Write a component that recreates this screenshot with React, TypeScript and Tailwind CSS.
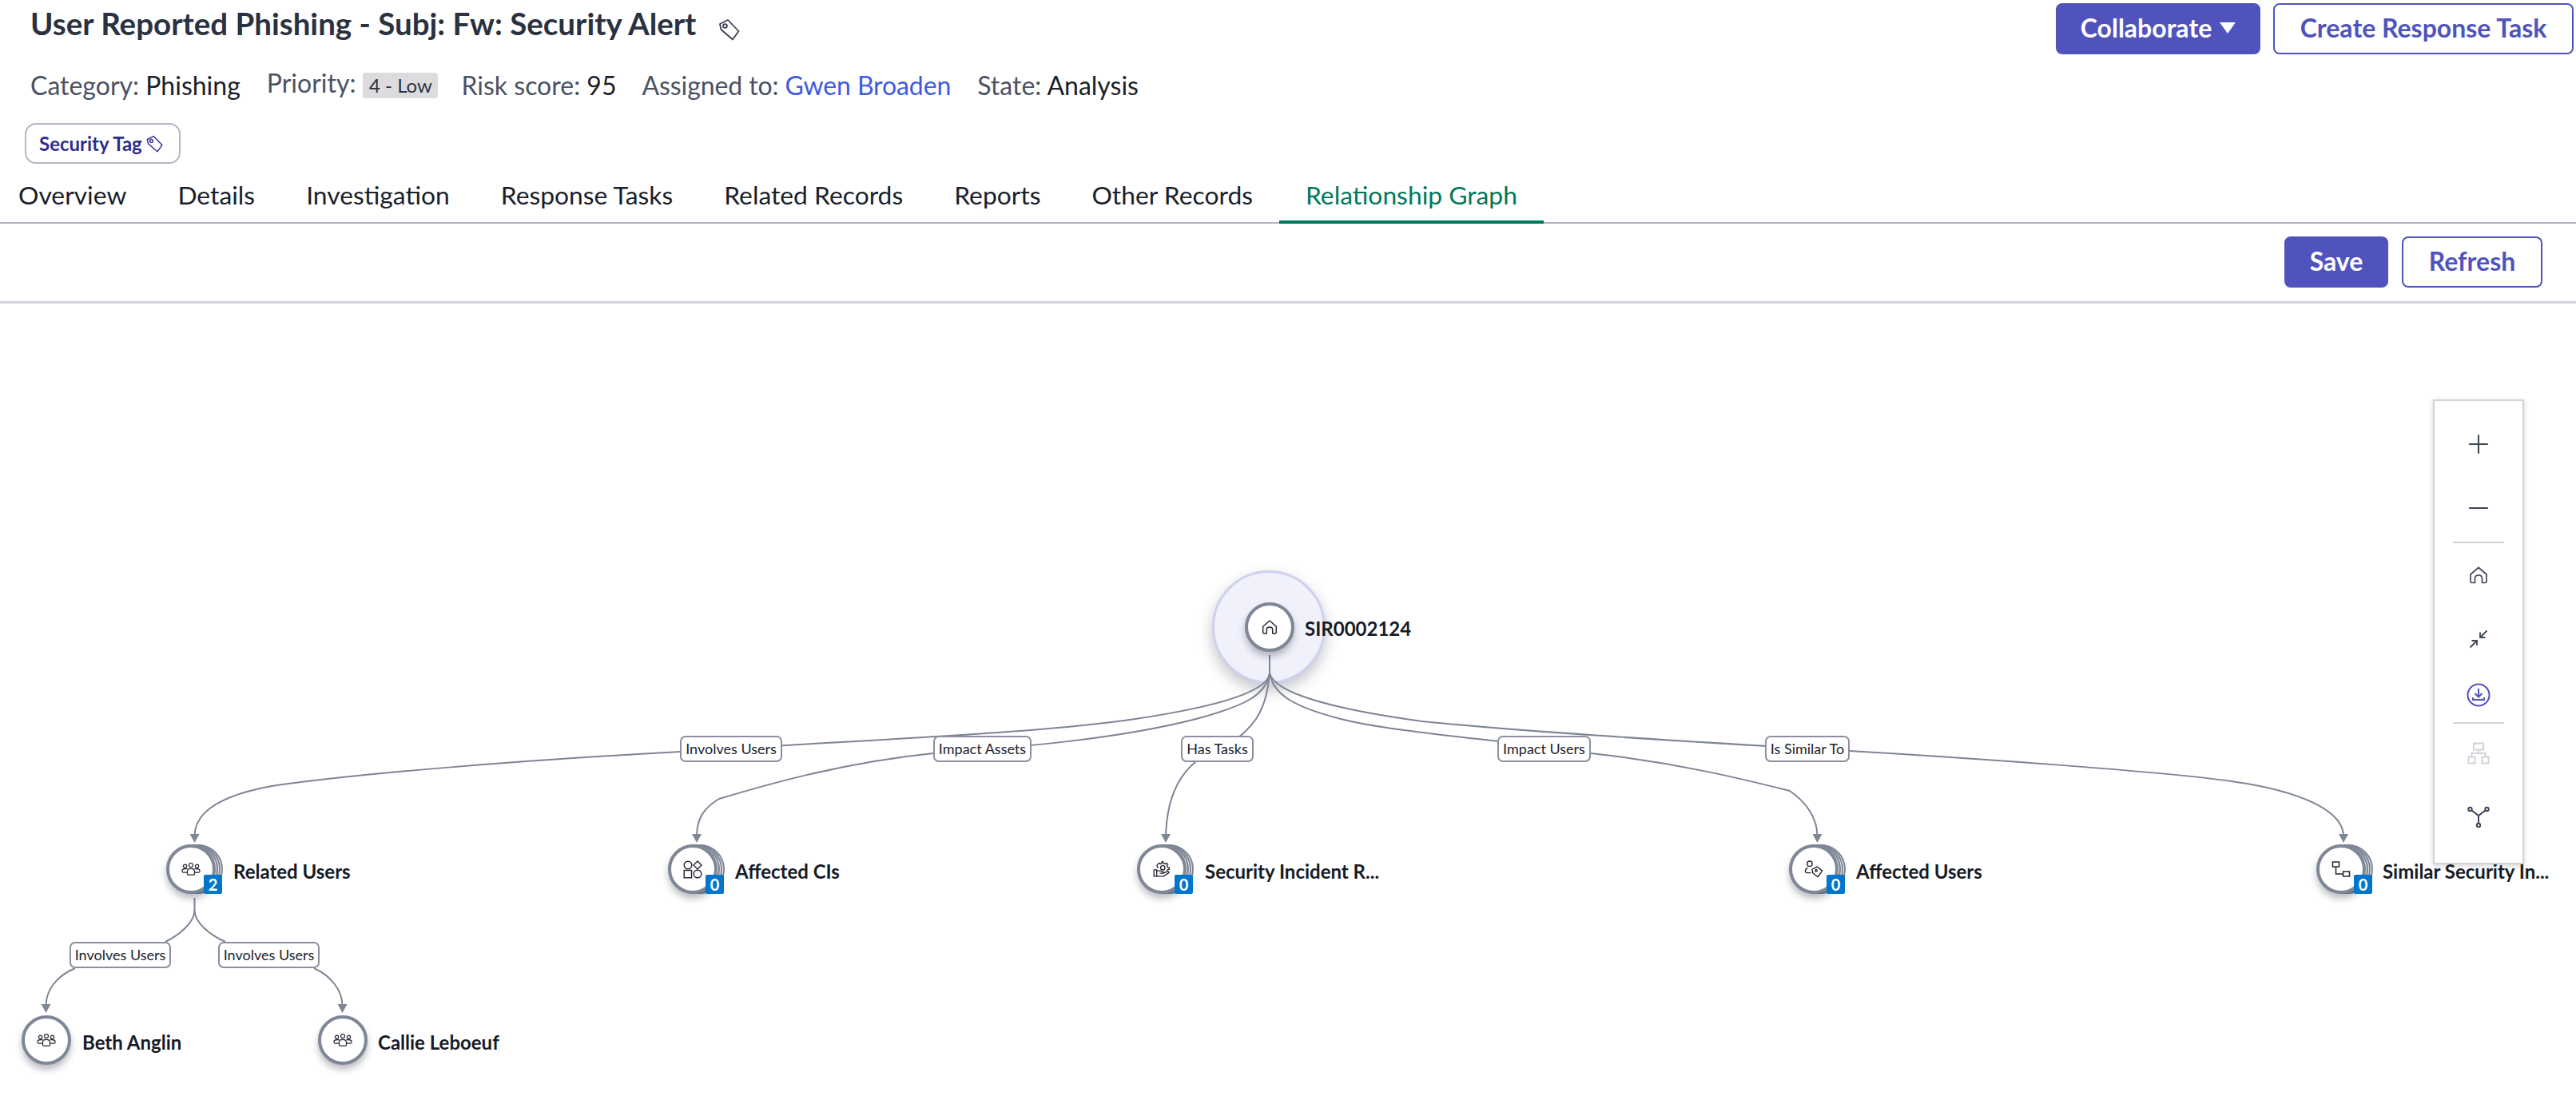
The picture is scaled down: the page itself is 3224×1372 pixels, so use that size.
import { ReactNode } from 'react'
import { Minus, Plus } from 'lucide-react'

const TOP = 380

const tabs = ['Overview', 'Details', 'Investigation', 'Response Tasks', 'Related Records', 'Reports', 'Other Records']

const TagIcon = ({ className }: { className: string }) => (
  <svg viewBox="0 0 28 28" fill="none" stroke="currentColor" strokeWidth="1.8" strokeLinejoin="round" className={className}>
    <path d="M3 7 L13 2 L26.5 16 L19 26.5 L4.5 14 Z" />
    <circle cx="9.5" cy="9.5" r="2.4" />
  </svg>
)

const HomeIcon = ({ className }: { className: string }) => (
  <svg viewBox="0 0 24 22" fill="none" stroke="currentColor" strokeWidth="1.7" strokeLinejoin="round" className={className}>
    <path d="M12 1.5 L22 10 V19 Q22 20.5 20.5 20.5 H16.5 V15.5 Q16.5 11 12 11 Q7.5 11 7.5 15.5 V20.5 H3.5 Q2 20.5 2 19 V10 Z" />
  </svg>
)

const UsersIcon = () => (
  <svg viewBox="0 0 24 16" fill="none" stroke="#20242e" strokeWidth="1.2" className="w-[24px] h-[16px]">
    <circle cx="12" cy="3" r="2.5" />
    <circle cx="4.5" cy="4.3" r="2.1" />
    <circle cx="19.5" cy="4.3" r="2.1" />
    <path d="M7.5 14 V10.5 Q7.5 7.3 12 7.3 Q16.5 7.3 16.5 10.5 V14 Q16.5 15.2 15.5 15.2 H8.5 Q7.5 15.2 7.5 14 Z" />
    <path d="M7.5 12.2 H2.5 Q1 12.2 1 10.7 V9.7 Q1 7.6 4.5 7.6 H7.5" />
    <path d="M16.5 12.2 H21.5 Q23 12.2 23 10.7 V9.7 Q23 7.6 19.5 7.6 H16.5" />
  </svg>
)

const CisIcon = () => (
  <svg viewBox="0 0 24 23" fill="none" stroke="#20242e" strokeWidth="1.4" className="w-[24px] h-[23px]">
    <circle cx="6" cy="6" r="4.8" />
    <path d="M18 1 L23 6 L18 11 L13 6 Z" />
    <rect x="1.2" y="12.5" width="9.3" height="9.3" />
    <circle cx="18" cy="17" r="4.8" />
  </svg>
)

const TaskIcon = () => (
  <svg viewBox="0 0 26 26" fill="none" stroke="#20242e" strokeWidth="1.6" className="w-[22px] h-[22px]">
    <path d="M13 2 L15 2 L15.6 4.4 L18 5.4 L20 4 L22 6 L20.8 8 L21.8 10.4 L24 11 V13.2 L21.8 13.8 L21 16" />
    <path d="M8.4 11 L7 10.4 L5.8 8 L7 6 L9 4 L11 5.4 L13 4.4 V2" />
    <circle cx="14.5" cy="11" r="3.2" />
    <path d="M1.5 14 H5.5 V23.5 H1.5 Z" />
    <path d="M5.5 15.5 H11 L16 17.5 Q17 19 15 19 H10 M15 19 L22 16.5 Q24.5 16.5 23.5 18.5 L16 23.5 H5.5" />
  </svg>
)

const UserTagIcon = () => (
  <svg viewBox="0 0 28 26" fill="none" stroke="#20242e" strokeWidth="1.6" strokeLinejoin="round" className="w-[24px] h-[22px]">
    <circle cx="8" cy="5" r="3.8" />
    <path d="M5 11 Q1.5 12.5 1.5 16 Q1.5 18.5 4 18.5 H10" />
    <path d="M11.5 13 L19 9.5 L26.5 15.5 L20 24.5 L12.5 18.5 Z" />
    <circle cx="17.5" cy="15" r="1.5" />
  </svg>
)

const SimilarIcon = () => (
  <svg viewBox="0 0 24 20" fill="none" stroke="#20242e" strokeWidth="1.5" className="w-[24px] h-[20px]">
    <rect x="1.5" y="1" width="8" height="6" />
    <rect x="14.5" y="13" width="8" height="6" />
    <path d="M5.5 7 V16 H14.5" />
  </svg>
)

interface GraphNodeProps {
  cx: number
  cy: number
  label: string
  labelX: number
  count?: number
  icon: ReactNode
}

const GraphNode = ({ cx, cy, label, labelX, count, icon }: GraphNodeProps) => (
  <>
    <div className="absolute" style={{ left: cx - 31, top: cy - 31 - TOP }}>
      <div className="relative w-[62px] h-[62px]">
        {count !== undefined && (
          <>
            <div className="absolute left-[9px] top-0 w-[62px] h-[62px] rounded-full border-2 border-[#7f8797] bg-white" />
            <div className="absolute left-[6px] top-0 w-[62px] h-[62px] rounded-full border-2 border-[#7f8797] bg-white" />
            <div className="absolute left-[3px] top-0 w-[62px] h-[62px] rounded-full border-2 border-[#7f8797] bg-white" />
          </>
        )}
        <div className="absolute inset-0 rounded-full border-[4px] border-[#7f8797] bg-white flex items-center justify-center shadow-[0_6px_8px_rgba(40,44,60,0.3)]">
          {icon}
        </div>
        {count !== undefined && (
          <div className="absolute left-[47px] top-[38px] w-[23px] h-[24px] rounded-[2px] bg-[#0176cc] text-white text-[20px] font-bold leading-[24px] text-center">
            {count}
          </div>
        )}
      </div>
    </div>
    <div
      className="absolute text-[24px] leading-[30px] font-bold text-[#161b26] whitespace-nowrap"
      style={{ left: labelX, top: cy - 12 - TOP }}
    >
      {label}
    </div>
  </>
)

const EdgeLabel = ({ left, right, top, text }: { left: number; right: number; top: number; text: string }) => (
  <div
    className="absolute h-[33px] flex items-center justify-center bg-white border-2 border-[#8a90a0] rounded-[7px] text-[18px] text-[#20242e] whitespace-nowrap"
    style={{ left, width: right - left, top: top - TOP }}
  >
    {text}
  </div>
)

const edges = [
  'M1589 820 L1589 843 C1586 870 1500 888 1421 900 C1300 918 1100 925 852 941 C650 952 450 968 340 984 C280 995 244 1015 243.5 1046',
  'M1589 843 C1584 870 1560 883 1497 900 C1400 925 1280 935 1168 943 C1050 955 950 985 900 1000 C880 1012 872.5 1025 872 1046',
  'M1589 843 C1587 860 1585 880 1572 900 C1555 925 1520 945 1497 953 C1470 975 1460 1010 1459 1046',
  'M1589 843 C1594 870 1620 885 1678 900 C1750 918 1874 925 1991 943 C2100 955 2180 975 2240 990 C2262 1005 2274 1025 2274.5 1046',
  'M1589 843 C1596 868 1670 888 1780 903 C1900 915 2050 925 2315 940 C2450 948 2700 965 2793 978 C2880 990 2932 1015 2933 1046',
  'M243.5 1124 L243.5 1140 C243 1155 225 1170 207 1179 M94 1212 C70 1222 58 1240 57.5 1258',
  'M243.5 1140 C244 1155 262 1170 282 1179 M393 1212 C415 1222 428 1240 428.5 1258',
]

const arrows = [
  [243.5, 1055],
  [872, 1055],
  [1459, 1055],
  [2274.5, 1055],
  [2933, 1055],
  [57.5, 1268],
  [428.5, 1268],
]

const App = () => {
  return (
    <div className="w-[3224px] h-[1372px] overflow-hidden bg-white flex flex-col font-['Lato',sans-serif]">
      {/* record header */}
      <div className="flex justify-between h-[72px] pr-[3px]">
        <div className="flex items-start pl-[38px] pt-[4px]">
          <h1 className="text-[38.5px] leading-[50px] font-bold text-[#2a3140]">
            User Reported Phishing - Subj: Fw: Security Alert
          </h1>
          <TagIcon className="w-[28px] h-[28px] ml-[27px] mt-[19px] text-[#3a4150]" />
        </div>
        <div className="flex gap-[16px] pt-[4px] h-[68px] box-content">
          <button className="w-[256px] h-[64px] pb-[2px] rounded-[8px] bg-[#5053bc] text-white text-[32px] font-bold flex items-center justify-center gap-[10px]">
            Collaborate
            <span className="w-0 h-0 border-x-[10px] border-x-transparent border-t-[14px] border-t-white" />
          </button>
          <button className="w-[376px] h-[64px] pb-[2px] rounded-[8px] bg-white border-2 border-[#5053bc] text-[#5053bc] text-[32px] font-bold">
            Create Response Task
          </button>
        </div>
      </div>

      <div className="flex items-center h-[64px] mt-[3px] pl-[38px] text-[32px] text-[#4a5263]">
        <span>
          Category: <span className="text-[#1a1f2b]">Phishing</span>
        </span>
        <span className="flex items-center gap-[9px] ml-[33px]">
          <span className="-translate-y-[3px]">Priority:</span>
          <span className="w-[94px] h-[32px] rounded-[3px] bg-[#dcdcde] text-[#2a3140] text-[24px] leading-[32px] text-center">
            4 - Low
          </span>
        </span>
        <span className="ml-[29px]">
          Risk score: <span className="text-[#1a1f2b]">95</span>
        </span>
        <span className="ml-[32px] tracking-[-0.1px]">
          Assigned to: <span className="text-[#3f5be0]">Gwen Broaden</span>
        </span>
        <span className="ml-[33px]">
          State: <span className="text-[#1a1f2b]">Analysis</span>
        </span>
      </div>

      <div className="pl-[31px] mt-[15px]">
        <div className="inline-flex items-center gap-[4px] w-[195px] h-[51px] pl-[16px] rounded-[14px] border-2 border-[#b4b8c6] text-[24px] font-bold text-[#2e2e8a]">
          Security Tag
          <TagIcon className="w-[22px] h-[24px]" />
        </div>
      </div>

      {/* tabs */}
      <div className="flex h-[75px] border-b-2 border-[#b0b4c0] box-border pl-[23px]">
        {tabs.map((t, i) => (
          <div
            key={t}
            className={`${i === 0 ? 'pr-[32px]' : 'px-[32px]'} pt-[18px] text-[31.8px] leading-[42px] text-[#1a1f2b]`}
          >
            {t}
          </div>
        ))}
        <div className="px-[33px] ml-[1px] pt-[18px] h-[75px] border-b-[4px] border-[#00795a] text-[31.8px] leading-[42px] text-[#00795a]">
          Relationship Graph
        </div>
      </div>

      {/* toolbar */}
      <div className="flex justify-end items-start gap-[17px] h-[100px] pt-[16px] pr-[42px] border-b-[3px] border-[#d2d2da] box-border">
        <button className="w-[130px] h-[64px] pb-[2px] rounded-[8px] bg-[#5053bc] text-white text-[32px] font-bold">Save</button>
        <button className="w-[176px] h-[64px] pb-[2px] rounded-[8px] bg-white border-2 border-[#5053bc] text-[#5053bc] text-[32px] font-bold">
          Refresh
        </button>
      </div>

      {/* graph canvas */}
      <div className="relative flex-1">
        <div
          className="absolute w-[142px] h-[142px] rounded-full bg-[#f1f1fb] border-[3.5px] border-[#cfd0ee] shadow-[0_8px_18px_rgba(40,44,60,0.28)]"
          style={{ left: 1517, top: 714 - TOP }}
        />
        <svg className="absolute left-0 top-0" width="3224" height="992" viewBox={`0 ${TOP} 3224 992`} fill="none">
          {edges.map((d, i) => (
            <path key={i} d={d} stroke="#7d8494" strokeWidth="2" />
          ))}
          {arrows.map(([x, y]) => (
            <polygon key={x} points={`${x - 6},${y - 11} ${x + 6},${y - 11} ${x},${y}`} fill="#7f8797" />
          ))}
        </svg>

        {/* root node */}
        <div
          className="absolute w-[62px] h-[62px] rounded-full border-[4px] border-[#7f8797] bg-white flex items-center justify-center shadow-[0_6px_8px_rgba(40,44,60,0.3)]"
          style={{ left: 1558, top: 754 - TOP }}
        >
          <HomeIcon className="w-[20px] h-[20px] text-[#20242e]" />
        </div>
        <div className="absolute text-[24px] leading-[30px] font-bold text-[#161b26]" style={{ left: 1633, top: 772 - TOP }}>
          SIR0002124
        </div>

        <GraphNode cx={239} cy={1088} label="Related Users" labelX={292} count={2} icon={<UsersIcon />} />
        <GraphNode cx={867} cy={1088} label="Affected CIs" labelX={920} count={0} icon={<CisIcon />} />
        <GraphNode cx={1454} cy={1088} label="Security Incident R..." labelX={1508} count={0} icon={<TaskIcon />} />
        <GraphNode cx={2270} cy={1088} label="Affected Users" labelX={2323} count={0} icon={<UserTagIcon />} />
        <GraphNode cx={2930} cy={1088} label="Similar Security In..." labelX={2982} count={0} icon={<SimilarIcon />} />
        <GraphNode cx={58} cy={1302} label="Beth Anglin" labelX={103} icon={<UsersIcon />} />
        <GraphNode cx={429} cy={1302} label="Callie Leboeuf" labelX={473} icon={<UsersIcon />} />

        <EdgeLabel left={851} right={979} top={921} text="Involves Users" />
        <EdgeLabel left={1168} right={1291} top={921} text="Impact Assets" />
        <EdgeLabel left={1478} right={1569} top={921} text="Has Tasks" />
        <EdgeLabel left={1874} right={1991} top={921} text="Impact Users" />
        <EdgeLabel left={2209} right={2315} top={921} text="Is Similar To" />
        <EdgeLabel left={87} right={214} top={1179} text="Involves Users" />
        <EdgeLabel left={273} right={400} top={1179} text="Involves Users" />

        {/* zoom controls */}
        <div
          className="absolute w-[114px] h-[582px] bg-white border-2 border-[#d2d2da] shadow-[0_2px_6px_rgba(40,44,60,0.2)] flex flex-col items-center text-[#3f4656]"
          style={{ left: 3045, top: 500 - TOP }}
        >
          <div className="h-[80px] mt-[14px] flex items-center"><Plus size={38} strokeWidth={1.3} /></div>
          <div className="h-[80px] flex items-center"><Minus size={38} strokeWidth={1.3} /></div>
          <div className="w-[64px] h-[2px] shrink-0 bg-[#d2d2da] mt-[2px]" />
          <div className="h-[80px] flex items-center"><HomeIcon className="w-[24px] h-[22px]" /></div>
          <div className="h-[80px] flex items-center">
            <svg viewBox="0 0 24 24" fill="none" stroke="currentColor" strokeWidth="1.8" className="w-[24px] h-[24px]">
              <path d="M1.5 22.5 L10 14 M3.5 14 H10 V20 M22.5 1.5 L14 10 M14 3.5 V10 H20.5" />
            </svg>
          </div>
          <div className="h-[60px] flex items-center text-[#5053bc]">
            <svg viewBox="0 0 30 30" fill="none" stroke="currentColor" strokeWidth="2" className="w-[30px] h-[30px]">
              <circle cx="15" cy="15" r="13.5" />
              <path d="M15 7 V17 M10.5 13 L15 17.5 L19.5 13 M8 18 V21 H22 V18" />
            </svg>
          </div>
          <div className="w-[64px] h-[2px] shrink-0 bg-[#d2d2da] mt-[4px]" />
          <div className="h-[74px] flex items-center text-[#d2d2da]">
            <svg viewBox="0 0 28 28" fill="none" stroke="currentColor" strokeWidth="2" className="w-[28px] h-[28px]">
              <rect x="8" y="1.5" width="12" height="8" />
              <rect x="1.5" y="18.5" width="8" height="8" />
              <rect x="18.5" y="18.5" width="8" height="8" />
              <path d="M14 9.5 V14 M5.5 18.5 V14 H22.5 V18.5" />
            </svg>
          </div>
          <div className="h-[86px] flex items-center">
            <svg viewBox="0 0 28 28" fill="none" stroke="currentColor" strokeWidth="2" className="w-[28px] h-[28px]">
              <circle cx="3.5" cy="4" r="2.2" />
              <circle cx="24.5" cy="4" r="2.2" />
              <circle cx="14" cy="24" r="2.2" />
              <path d="M5.5 5.5 L14 12 L22.5 5.5 M14 12 V22" />
            </svg>
          </div>
        </div>
      </div>
    </div>
  )
}

export default App
